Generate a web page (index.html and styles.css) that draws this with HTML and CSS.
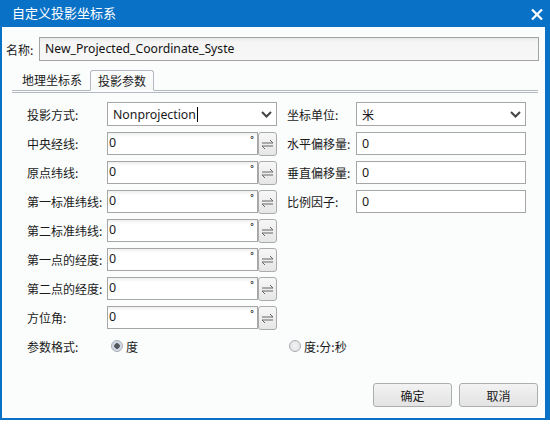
FILE: index.html
```html
<!DOCTYPE html>
<html lang="zh">
<head>
<meta charset="utf-8">
<link rel="stylesheet" href="styles.css">
</head>
<body>
<div class="window">
  <div class="titlebar">
    <span class="title">自定义投影坐标系</span>
    <svg class="close" width="12" height="11" viewBox="0 0 12 11"><path d="M1 0.5 L11 10.5 M11 0.5 L1 10.5" stroke="#fff" stroke-width="2.2" fill="none"/></svg>
  </div>
  <div class="content">
    <div class="name-row">
      <span class="label">名称:</span>
      <div class="name-input">New_Projected_Coordinate_Syste</div>
    </div>
    <div class="tabs">
      <div class="tab">地理坐标系</div>
      <div class="tab active">投影参数</div>
    </div>
    <div class="panel">
      <div class="grid">
        <span class="lbl">投影方式:</span>
        <div class="select"><span class="latin">Nonprojection</span><span class="caret"></span><svg class="chev" width="11" height="7" viewBox="0 0 11 7"><path d="M1 1 L5.5 5.5 L10 1" stroke="#444" stroke-width="2" fill="none"/></svg></div>
        <span class="lbl rl">坐标单位:</span>
        <div class="select"><span>米</span><span class="spacer"></span><svg class="chev" width="11" height="7" viewBox="0 0 11 7"><path d="M1 1 L5.5 5.5 L10 1" stroke="#444" stroke-width="2" fill="none"/></svg></div>

        <span class="lbl">中央经线:</span>
        <div class="angle"><div class="ainput"><span class="val">0</span><span class="deg">°</span></div><div class="swap"><svg width="13" height="11" viewBox="0 0 13 11"><path d="M1 4 H12 L9 1 M12 7 H1 L4 10" stroke="#666" stroke-width="1" fill="none"/></svg></div></div>
        <span class="lbl rl">水平偏移量:</span>
        <div class="tinput"><span class="val">0</span></div>

        <span class="lbl">原点纬线:</span>
        <div class="angle"><div class="ainput"><span class="val">0</span><span class="deg">°</span></div><div class="swap"><svg width="13" height="11" viewBox="0 0 13 11"><path d="M1 4 H12 L9 1 M12 7 H1 L4 10" stroke="#666" stroke-width="1" fill="none"/></svg></div></div>
        <span class="lbl rl">垂直偏移量:</span>
        <div class="tinput"><span class="val">0</span></div>

        <span class="lbl">第一标准纬线:</span>
        <div class="angle"><div class="ainput"><span class="val">0</span><span class="deg">°</span></div><div class="swap"><svg width="13" height="11" viewBox="0 0 13 11"><path d="M1 4 H12 L9 1 M12 7 H1 L4 10" stroke="#666" stroke-width="1" fill="none"/></svg></div></div>
        <span class="lbl rl">比例因子:</span>
        <div class="tinput"><span class="val">0</span></div>

        <span class="lbl">第二标准纬线:</span>
        <div class="angle"><div class="ainput"><span class="val">0</span><span class="deg">°</span></div><div class="swap"><svg width="13" height="11" viewBox="0 0 13 11"><path d="M1 4 H12 L9 1 M12 7 H1 L4 10" stroke="#666" stroke-width="1" fill="none"/></svg></div></div>
        <span class="empty"></span><span class="empty"></span>

        <span class="lbl">第一点的经度:</span>
        <div class="angle"><div class="ainput"><span class="val">0</span><span class="deg">°</span></div><div class="swap"><svg width="13" height="11" viewBox="0 0 13 11"><path d="M1 4 H12 L9 1 M12 7 H1 L4 10" stroke="#666" stroke-width="1" fill="none"/></svg></div></div>
        <span class="empty"></span><span class="empty"></span>

        <span class="lbl">第二点的经度:</span>
        <div class="angle"><div class="ainput"><span class="val">0</span><span class="deg">°</span></div><div class="swap"><svg width="13" height="11" viewBox="0 0 13 11"><path d="M1 4 H12 L9 1 M12 7 H1 L4 10" stroke="#666" stroke-width="1" fill="none"/></svg></div></div>
        <span class="empty"></span><span class="empty"></span>

        <span class="lbl">方位角:</span>
        <div class="angle"><div class="ainput"><span class="val">0</span><span class="deg">°</span></div><div class="swap"><svg width="13" height="11" viewBox="0 0 13 11"><path d="M1 4 H12 L9 1 M12 7 H1 L4 10" stroke="#666" stroke-width="1" fill="none"/></svg></div></div>
        <span class="empty"></span><span class="empty"></span>
      </div>
      <div class="radio-row">
        <span class="lbl">参数格式:</span>
        <div class="radio-opt first"><span class="radio checked"></span><span>度</span></div>
        <div class="radio-opt second"><span class="radio"></span><span>度:分:秒</span></div>
      </div>
    </div>
    <div class="footer">
      <div class="btn">确定</div>
      <div class="btn">取消</div>
    </div>
  </div>
</div>
</body>
</html>
```
FILE: styles.css
```css
* { box-sizing: border-box; }
html, body { margin: 0; padding: 0; background: #ffffff; }
body {
  width: 550px; height: 424px; overflow: hidden;
  font-family: "Noto Sans CJK SC", "Noto Sans", sans-serif;
  font-size: 12px; color: #1a1a1a;
}
.window {
  width: 550px; height: 420px;
  background: #fbfdfd;
  border-left: 2px solid #0a72c6;
  border-right: 5px solid #0a72c6;
  border-bottom: 2px solid #0a72c6;
  display: flex; flex-direction: column;
}
.titlebar {
  height: 27px; margin-left: -2px; margin-right: -5px;
  background: #0a72c6;
  display: flex; align-items: center; justify-content: space-between;
  padding: 0 7px 0 12px;
}
.title { color: #fff; font-size: 13px; line-height: 16px; margin-top: -1px; }
.close { margin-top: 2px; }
.content { flex: 1; display: flex; flex-direction: column; }
.name-row {
  display: flex; align-items: center;
  margin-top: 10px; padding-left: 4px;
}
.name-row .label { width: 33px; font-size: 12px; }
.name-input {
  width: 500px; height: 24px;
  border: 1px solid #a3a3a3;
  background: linear-gradient(#e9e9e9, #f5f5f5 4px, #f7f7f7);
  font-family: "Noto Sans", sans-serif; font-size: 12.2px;
  line-height: 21px; padding-left: 5px; color: #111;
}
.tabs {
  display: flex; align-items: flex-end;
  margin: 8px 0 0 10px; width: 526px; height: 22px;
  border-bottom: 1px solid #b4b8c0;
}
.tab { height: 20px; line-height: 19px; padding: 0 8px 0 10px; font-size: 12px; }
.tab.active {
  height: 21px; margin-bottom: -1px;
  border: 1px solid #b4b8c0; border-bottom-color: #fbfdfd;
  border-radius: 3px 3px 0 0; padding: 0 7px;
  background: linear-gradient(#fdfdfd, #f6f8f8);
}
.panel {
  margin-left: 10px; width: 526px;
  border-top: 1px solid #b4b8c0; margin-top: 1px;
  padding-top: 9px; padding-left: 15px;
}
.grid {
  display: grid;
  grid-template-columns: 80px 170px 79px 170px;
  grid-template-rows: 24px repeat(7, 23px);
  row-gap: 6px;
}
.lbl { display: flex; align-items: center; font-size: 12px; white-space: nowrap; color: #1a1a1a; }
.lbl.rl { padding-left: 10px; }
.select {
  display: flex; align-items: center;
  border: 1px solid #a6a6a6; background: #fff;
  padding: 0 4px 0 5px; font-size: 12px;
}
.select .latin { font-family: "Noto Sans", sans-serif; font-size: 12.3px; }
.caret { width: 1px; height: 15px; background: #000; margin-left: 1px; flex: 1; max-width: 1px; }
.select .spacer { flex: 1; }
.select .caret + .chev { margin-left: auto; }
.chev { margin-right: 0; }
.angle { display: flex; }
.ainput {
  width: 151px; height: 23px; display: flex;
  border: 1px solid #a6a6a6;
  background: linear-gradient(#eeeeee, #ffffff 4px);
  padding-left: 1px; padding-right: 3px;
}
.val { font-family: "Noto Sans", sans-serif; font-size: 12.5px; line-height: 20px; flex: 1; }
.deg { font-size: 9px; line-height: 9px; margin-top: 2px; font-weight: bold; color: #333; }
.swap {
  width: 19px; height: 24px; margin-left: 0;
  border: 1px solid #ababab; border-radius: 3px;
  background: linear-gradient(#f7f7f7, #e6e6e6);
  display: flex; align-items: center; justify-content: center;
}
.tinput {
  border: 1px solid #a6a6a6; background: #fff;
  padding-left: 5px; display: flex; align-items: center;
}
.tinput .val { line-height: 20px; }
.radio-row {
  display: flex; align-items: center; margin-top: 10px; height: 14px;
}
.radio-row .lbl { width: 84px; }
.radio-opt { display: flex; align-items: center; gap: 3px; font-size: 12px; }
.radio-opt.second { margin-left: 151px; }
.radio {
  width: 12px; height: 12px; border-radius: 50%;
  border: 1px solid #a9adb4;
  background: radial-gradient(circle, #f4f4f4 0, #dedede 100%);
  display: inline-block;
}
.radio.checked {
  background: radial-gradient(circle, #55595e 0, #55595e 2.5px, #c9d3de 3px, #e6ebf0 100%);
}
.footer {
  display: flex; justify-content: flex-end; gap: 7px;
  margin-top: auto; margin-bottom: 11px; padding-right: 7px;
}
.btn {
  width: 79px; height: 24px;
  border: 1px solid #adadad; border-radius: 3px;
  background: linear-gradient(#f3f3f3, #e3e3e3);
  display: flex; align-items: center; justify-content: center;
  font-size: 12px; color: #1a1a1a;
}
```
